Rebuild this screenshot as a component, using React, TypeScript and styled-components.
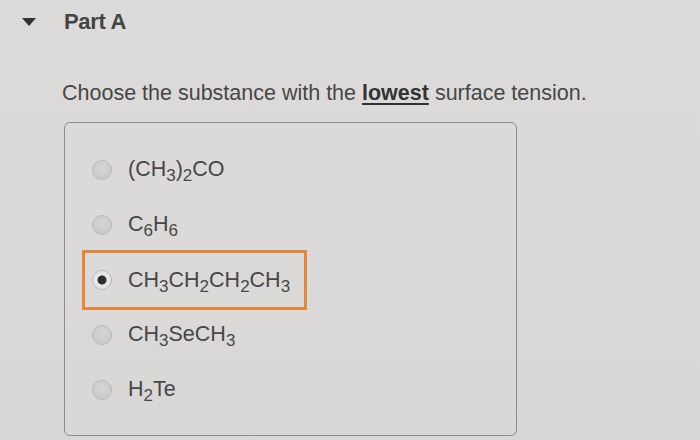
import { FC } from 'react';
import styled, { createGlobalStyle } from 'styled-components';

const GlobalStyle = createGlobalStyle`
  html, body {
    margin: 0;
    padding: 0;
    width: 700px;
    height: 440px;
    overflow: hidden;
    background: #dcdad8;
  }
`;

interface Choice {
  id: string;
  label: React.ReactNode;
}

const choices: Choice[] = [
  { id: 'a', label: <>(CH<sub>3</sub>)<sub>2</sub>CO</> },
  { id: 'b', label: <>C<sub>6</sub>H<sub>6</sub></> },
  { id: 'c', label: <>CH<sub>3</sub>CH<sub>2</sub>CH<sub>2</sub>CH<sub>3</sub></> },
  { id: 'd', label: <>CH<sub>3</sub>SeCH<sub>3</sub></> },
  { id: 'e', label: <>H<sub>2</sub>Te</> },
];

const SELECTED = 'c';

const App: FC = () => (
  <>
    <GlobalStyle />
    <Page>
      <Header>
        <Caret />
        <Title>Part A</Title>
      </Header>
      <Question>
        Choose the substance with the <strong>lowest</strong> surface tension.
      </Question>
      <AnswerBox>
        {choices.map((c) => (
          <Option key={c.id} selected={c.id === SELECTED}>
            <Radio selected={c.id === SELECTED} />
            <Label>{c.label}</Label>
          </Option>
        ))}
      </AnswerBox>
    </Page>
  </>
);

const Page = styled.div`
  width: 700px;
  height: 440px;
  box-sizing: border-box;
  background: linear-gradient(180deg, #dddbd9 0%, #dcdad8 60%, #d9d7d5 100%);
  font-family: 'Liberation Sans', Arial, sans-serif;
  color: #3f3f3f;
  padding: 9px 0 0 0;
`;

const Header = styled.div`
  display: flex;
  align-items: center;
  height: 26px;
`;

const Caret = styled.div`
  width: 0;
  height: 0;
  margin-left: 22px;
  margin-right: 28px;
  border-left: 7px solid transparent;
  border-right: 7px solid transparent;
  border-top: 8px solid #333;
`;

const Title = styled.div`
  font-size: 22px;
  font-weight: bold;
  color: #444;
  letter-spacing: -0.3px;
`;

const Question = styled.div`
  margin: 46px 0 0 62px;
  font-size: 21.5px;
  line-height: 25px;
  color: #474747;

  strong {
    text-decoration: underline;
    text-decoration-thickness: 2px;
    text-underline-offset: 3px;
    color: #333;
  }
`;

const AnswerBox = styled.div`
  margin: 16px 0 0 64px;
  width: 453px;
  height: 314px;
  box-sizing: border-box;
  border: 1.5px solid #8c8c8c;
  border-radius: 6px;
  padding: 19px 0 0 17px;
  display: flex;
  flex-direction: column;
  align-items: flex-start;
`;

const Option = styled.div<{ selected: boolean }>`
  display: flex;
  align-items: center;
  height: 55px;
  box-sizing: border-box;
  padding: 0 14px 0 7px;
  border: 3px solid ${({ selected }) => (selected ? '#e2883a' : 'transparent')};
  ${({ selected }) => selected && 'height: 60px; margin: -2px 0 -3px 0;'}
`;

const Radio = styled.span<{ selected: boolean }>`
  width: 20px;
  height: 20px;
  border-radius: 50%;
  box-sizing: border-box;
  border: 1px solid #b9b9b9;
  background: ${({ selected }) =>
    selected
      ? 'radial-gradient(circle, #2e2e2e 0 4px, #e9e9e9 5px, #dcdcdc 100%)'
      : 'radial-gradient(circle at 50% 40%, #d6d6d6 0%, #c6c6c6 100%)'};
  margin-right: 16px;
  flex-shrink: 0;
`;

const Label = styled.span`
  font-size: 21.5px;
  color: #474747;

  sub {
    font-size: 17px;
    vertical-align: -5px;
    line-height: 0;
  }
`;

export default App;
